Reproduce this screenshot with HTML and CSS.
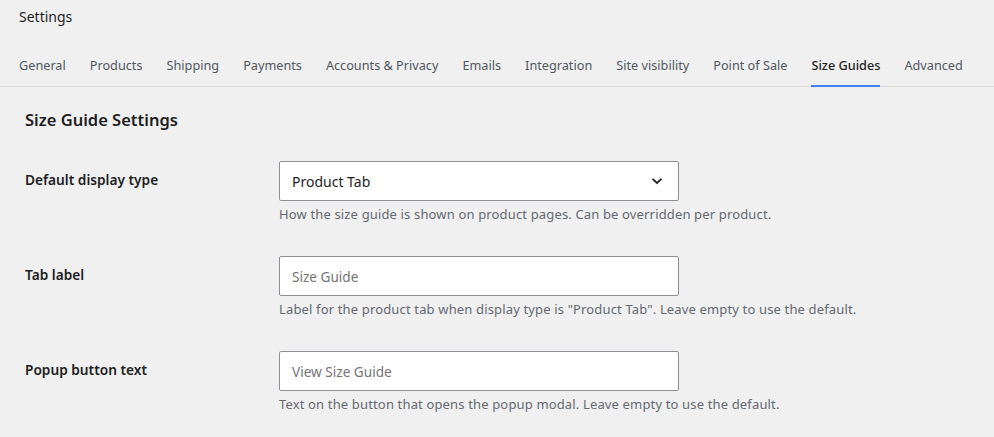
FILE: index.html
```html
<!DOCTYPE html>
<html lang="en">
<head>
<meta charset="utf-8">
<title>Settings</title>
<link rel="stylesheet" href="styles.css">
</head>
<body>
<header class="page-header">
  <h1 class="page-title">Settings</h1>
</header>
<nav class="tabs">
  <a class="tab" href="#">General</a>
  <a class="tab" href="#">Products</a>
  <a class="tab" href="#">Shipping</a>
  <a class="tab" href="#">Payments</a>
  <a class="tab" href="#">Accounts &amp; Privacy</a>
  <a class="tab" href="#">Emails</a>
  <a class="tab" href="#">Integration</a>
  <a class="tab" href="#">Site visibility</a>
  <a class="tab" href="#">Point of Sale</a>
  <a class="tab tab-active" href="#">Size Guides</a>
  <a class="tab" href="#">Advanced</a>
</nav>
<main class="content">
  <h2 class="section-title">Size Guide Settings</h2>
  <div class="form">
    <div class="row">
      <label class="row-label">Default display type</label>
      <div class="field">
        <div class="select">
          <span class="select-value">Product Tab</span>
          <svg class="chevron" width="12" height="8" viewBox="0 0 12 8"><path d="M1.5 1.8 L6 6 L10.5 1.8" fill="none" stroke="#1e1e1e" stroke-width="1.8"/></svg>
        </div>
        <p class="desc">How the size guide is shown on product pages. Can be overridden per product.</p>
      </div>
    </div>
    <div class="row">
      <label class="row-label">Tab label</label>
      <div class="field">
        <div class="input"><span class="placeholder">Size Guide</span></div>
        <p class="desc">Label for the product tab when display type is "Product Tab". Leave empty to use the default.</p>
      </div>
    </div>
    <div class="row">
      <label class="row-label">Popup button text</label>
      <div class="field">
        <div class="input"><span class="placeholder">View Size Guide</span></div>
        <p class="desc">Text on the button that opens the popup modal. Leave empty to use the default.</p>
      </div>
    </div>
  </div>
</main>
</body>
</html>
```
FILE: styles.css
```css
* { box-sizing: border-box; }
html, body { margin: 0; padding: 0; }
body {
  background: #f0f0f1;
  font-family: "Noto Sans", "Open Sans", sans-serif;
  color: #1e1e1e;
  font-size: 13px;
}
.page-header {
  padding: 8px 19px 0;
  height: 44px;
}
.page-title {
  margin: 0;
  font-size: 14px;
  font-weight: 400;
  line-height: 18px;
}
.tabs {
  display: flex;
  gap: 24px;
  padding: 0 19px;
  border-bottom: 1px solid #dcdcde;
  height: 43px;
}
.tab {
  display: block;
  flex: none;
  white-space: nowrap;
  color: #50575e;
  text-decoration: none;
  font-size: 12.7px;
  line-height: 18px;
  padding-top: 12px;
  font-weight: 400;
}
.tab-active {
  color: #1e1e1e;
  font-weight: 500;
  border-bottom: 2px solid #3e82ee;
  margin-bottom: -1px;
}
.content {
  padding: 0 25px;
}
.section-title {
  margin: 22px 0 0;
  font-size: 16.5px;
  font-weight: 600;
  line-height: 22px;
}
.form {
  display: flex;
  flex-direction: column;
  gap: 33px;
  margin-top: 30px;
}
.row {
  display: grid;
  grid-template-columns: 254px 400px;
}
.row-label {
  font-size: 13.7px;
  font-weight: 600;
  line-height: 18px;
  padding-top: 10px;
}
.select, .input {
  height: 40px;
  background: #fff;
  border: 1px solid #8c8f94;
  border-radius: 2px;
  display: flex;
  align-items: center;
  padding: 0 12px;
}
.select { justify-content: space-between; }
.select-value { font-size: 14px; color: #1e1e1e; }
.chevron { margin-right: 3px; }
.placeholder { font-size: 13.6px; color: #757575; }
.desc {
  margin: 4px 0 0;
  color: #646970;
  font-size: 13px;
  line-height: 18px;
  letter-spacing: 0.15px;
  white-space: nowrap;
}
```
